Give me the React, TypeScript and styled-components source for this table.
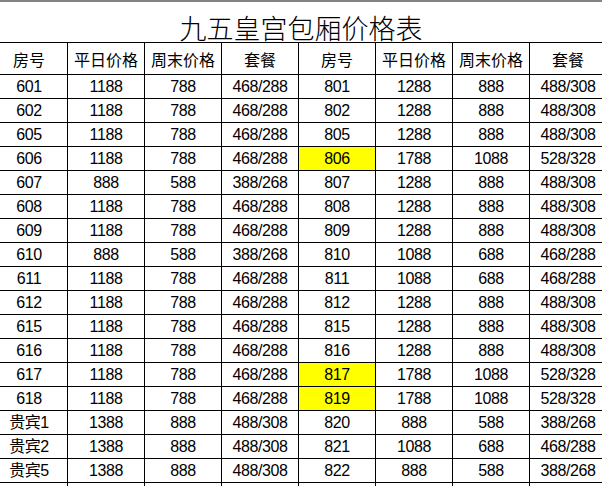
import React from "react";
import styled, { createGlobalStyle } from "styled-components";

const Global = createGlobalStyle`
  html, body { margin: 0; padding: 0; background: #fff; }
  body { width: 602px; height: 486px; overflow: hidden; }
  #root { width: 602px; height: 486px; overflow: hidden; }
`;

const Page = styled.div`
  display: flex;
  flex-direction: column;
  width: 602px;
  height: 486px;
  overflow: hidden;
  font-family: "Liberation Sans Narrow", "Liberation Sans", "Noto Sans CJK SC", sans-serif;
  color: #000;
`;

const TopBar = styled.div`
  height: 2px;
  flex: none;
  background: #838383;
`;

const TitleRow = styled.div`
  height: 40px;
  flex: none;
  display: flex;
  align-items: flex-end;
  justify-content: center;
`;

const Title = styled.h1`
  margin: 0;
  font-family: "Noto Sans CJK SC", sans-serif;
  font-weight: 300;
  font-size: 27px;
  line-height: 27px;
  padding-bottom: 1px;
`;

const Grid = styled.div`
  display: grid;
  grid-template-columns: repeat(8, 76px);
  grid-template-rows: 31px;
  grid-auto-rows: 23px;
  gap: 1px;
  background: #000;
  padding: 1px 0;
  margin-left: -9px;
  width: max-content;
  flex: none;
`;

const HeadCell = styled.div`
  background: #fff;
  display: flex;
  align-items: center;
  justify-content: center;
  font-family: "Noto Sans CJK SC", sans-serif;
  font-size: 16px;
  line-height: 1;
`;

const Cell = styled.div<{ $hl?: boolean }>`
  background: ${(p) => (p.$hl ? "#ffff00" : "#fff")};
  display: flex;
  align-items: center;
  justify-content: center;
  font-size: 16px;
  letter-spacing: -0.4px;
  line-height: 1;
  padding-top: 1px;
  box-sizing: border-box;
`;

type Row = [string, string, string, string, boolean?];

const left: Row[] = [
  ["601", "1188", "788", "468/288"],
  ["602", "1188", "788", "468/288"],
  ["605", "1188", "788", "468/288"],
  ["606", "1188", "788", "468/288"],
  ["607", "888", "588", "388/268"],
  ["608", "1188", "788", "468/288"],
  ["609", "1188", "788", "468/288"],
  ["610", "888", "588", "388/268"],
  ["611", "1188", "788", "468/288"],
  ["612", "1188", "788", "468/288"],
  ["615", "1188", "788", "468/288"],
  ["616", "1188", "788", "468/288"],
  ["617", "1188", "788", "468/288"],
  ["618", "1188", "788", "468/288"],
  ["贵宾1", "1388", "888", "488/308"],
  ["贵宾2", "1388", "888", "488/308"],
  ["贵宾5", "1388", "888", "488/308"],
];

const right: Row[] = [
  ["801", "1288", "888", "488/308"],
  ["802", "1288", "888", "488/308"],
  ["805", "1288", "888", "488/308"],
  ["806", "1788", "1088", "528/328", true],
  ["807", "1288", "888", "488/308"],
  ["808", "1288", "888", "488/308"],
  ["809", "1288", "888", "488/308"],
  ["810", "1088", "688", "468/288"],
  ["811", "1088", "688", "468/288"],
  ["812", "1288", "888", "488/308"],
  ["815", "1288", "888", "488/308"],
  ["816", "1288", "888", "488/308"],
  ["817", "1788", "1088", "528/328", true],
  ["819", "1788", "1088", "528/328", true],
  ["820", "888", "588", "388/268"],
  ["821", "1088", "688", "468/288"],
  ["822", "888", "588", "388/268"],
];

const headers = ["房号", "平日价格", "周末价格", "套餐", "房号", "平日价格", "周末价格", "套餐"];

export default function App() {
  return (
    <Page>
      <Global />
      <TopBar />
      <TitleRow>
        <Title>九五皇宫包厢价格表</Title>
      </TitleRow>
      <Grid>
        {headers.map((h, i) => (
          <HeadCell key={"h" + i}>{h}</HeadCell>
        ))}
        {left.map((l, i) => {
          const r = right[i];
          return (
            <React.Fragment key={i}>
              <Cell>{l[0]}</Cell>
              <Cell>{l[1]}</Cell>
              <Cell>{l[2]}</Cell>
              <Cell>{l[3]}</Cell>
              <Cell $hl={r[4]}>{r[0]}</Cell>
              <Cell>{r[1]}</Cell>
              <Cell>{r[2]}</Cell>
              <Cell>{r[3]}</Cell>
            </React.Fragment>
          );
        })}
        {Array.from({ length: 8 }).map((_, i) => (
          <Cell key={"e" + i} />
        ))}
      </Grid>
    </Page>
  );
}
